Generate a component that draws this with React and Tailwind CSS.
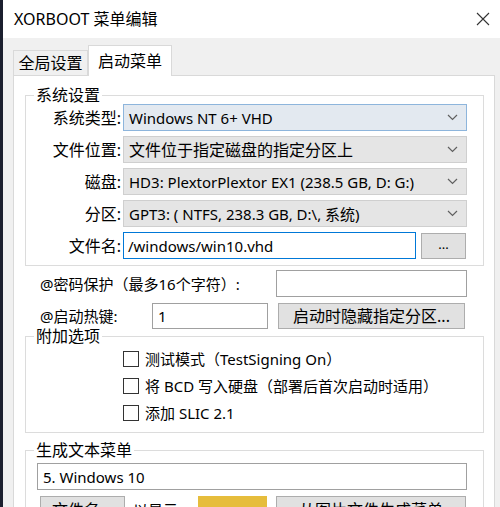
const font = { fontFamily: '"Noto Sans", "Noto Sans CJK SC", sans-serif' };

const Chevron = () => (
  <svg width="11" height="7" viewBox="0 0 11 7" className="shrink-0">
    <polyline points="1,1 5.5,5.5 10,1" fill="none" stroke="#606060" strokeWidth="1.2" />
  </svg>
);

const Combo = ({ text, focused, big }) => (
  <div
    className={`h-[27px] w-[344px] flex items-center justify-between pl-[5px] pr-[8px] border ${
      focused ? "bg-[#e3e9f0] border-[#8db5dc]" : "bg-[#e5e5e5] border-[#cfcfcf]"
    }`}
  >
    <span className={`whitespace-nowrap ${big ? "text-[16px]" : ""}`}>{text}</span>
    <Chevron />
  </div>
);

const Row = ({ label, children }) => (
  <div className="flex items-center">
    <div className="w-[97px] text-right pr-[2px] whitespace-nowrap text-[16px]">{label}</div>
    {children}
  </div>
);

const Check = ({ label }) => (
  <div className="h-[27px] flex items-center pl-[97px]">
    <div className="w-[16px] h-[16px] border border-[#333] bg-white mr-[6px]" />
    <span className="whitespace-nowrap">{label}</span>
  </div>
);

export default function App() {
  return (
    <div className="w-[500px] h-[507px] overflow-hidden flex bg-[#f0f0f0] text-[15px] leading-[18px] text-black" style={font}>
      <div className="w-[3px] bg-[#1b1f2e]" />
      <div className="flex-1 flex flex-col">
        {/* title bar */}
        <div className="h-[38px] shrink-0 bg-white flex items-center justify-between pl-[11px] pr-[10px]">
          <span className="text-[16px]">XORBOOT 菜单编辑</span>
          <svg width="14" height="14" viewBox="0 0 14 14">
            <path d="M1 1 L13 13 M13 1 L1 13" stroke="#333" strokeWidth="1.1" />
          </svg>
        </div>

        <div className="pl-[10px] pr-[5px] pt-[7px] flex-1 flex flex-col">
          {/* tabs */}
          <div className="flex items-end h-[30px]">
            <div className="w-[75px] h-[25px] border border-b-0 border-[#d9d9d9] flex items-center justify-center text-[16px]">全局设置</div>
            <div className="w-[84px] h-[31px] -mb-[1px] bg-white border border-b-0 border-[#d9d9d9] flex items-center justify-center text-[16px] relative z-10">启动菜单</div>
          </div>

          {/* panel */}
          <div className="flex-1 bg-white border border-[#d9d9d9] pl-[11px] pr-[10px]">
            <fieldset className="mt-[10px] border border-[#dcdcdc] pb-[6px]">
              <legend className="ml-[8px] px-[2px] leading-[18px] text-[16px]">系统设置</legend>
              <div className="flex flex-col gap-[5px]">
                <Row label="系统类型:">
                  <Combo text="Windows NT 6+ VHD" focused />
                </Row>
                <Row label="文件位置:">
                  <Combo text="文件位于指定磁盘的指定分区上" big />
                </Row>
                <Row label="磁盘:">
                  <Combo text="HD3: PlextorPlextor EX1 (238.5 GB, D: G:)" />
                </Row>
                <Row label="分区:">
                  <Combo text="GPT3: ( NTFS, 238.3 GB, D:\, 系统)" />
                </Row>
                <Row label="文件名:">
                  <div className="h-[27px] w-[293px] border border-[#0078d7] bg-white flex items-center pl-[4px]">/windows/win10.vhd</div>
                  <div className="ml-[5px] h-[26px] w-[45px] bg-[#e1e1e1] border border-[#adadad] flex items-center justify-center text-[13px] pb-[4px]">...</div>
                </Row>
              </div>
            </fieldset>

            <div className="mt-[4px] flex items-center h-[27px]">
              <span className="pl-[15px] w-[251px] whitespace-nowrap">@密码保护（最多16个字符）:</span>
              <div className="h-[27px] w-[191px] border border-[#a0a0a0] bg-white" />
            </div>
            <div className="mt-[5px] flex items-center h-[27px]">
              <span className="pl-[15px] w-[127px] whitespace-nowrap">@启动热键:</span>
              <div className="h-[26px] w-[116px] border border-[#a0a0a0] bg-white flex items-center pl-[5px]">1</div>
              <div className="ml-[10px] h-[26px] w-[187px] bg-[#e1e1e1] border border-[#adadad] flex items-center justify-center text-[16px]">启动时隐藏指定分区...</div>
            </div>

            <fieldset className="-mt-[2px] border border-[#dcdcdc] pb-[6px]">
              <legend className="ml-[8px] px-[2px] leading-[18px] text-[16px]">附加选项</legend>
              <Check label="测试模式（TestSigning On）" />
              <Check label="将 BCD 写入硬盘（部署后首次启动时适用）" />
              <Check label="添加 SLIC 2.1" />
            </fieldset>

            <fieldset className="mt-[8px] border border-[#dcdcdc]">
              <legend className="ml-[8px] px-[2px] leading-[18px] text-[16px]">生成文本菜单</legend>
              <div className="mt-[4px] ml-[11px] h-[27px] w-[430px] border border-[#a0a0a0] bg-white flex items-center pl-[5px]">5. Windows 10</div>
              <div className="mt-[6px] ml-[14px] flex items-start">
                <div className="h-[27px] w-[85px] bg-[#e1e1e1] border border-[#adadad] flex items-center justify-center text-[16px]">文件名...</div>
                <span className="ml-[8px] w-[65px] mt-[5px] whitespace-nowrap">以显示:</span>
                <div className="h-[27px] w-[69px] bg-[#e6bd3c]" />
                <div className="ml-[9px] h-[27px] w-[190px] bg-[#e1e1e1] border border-[#adadad] flex items-center justify-center text-[16px]">从图片文件生成菜单</div>
              </div>
            </fieldset>
          </div>
        </div>
      </div>
    </div>
  );
}
